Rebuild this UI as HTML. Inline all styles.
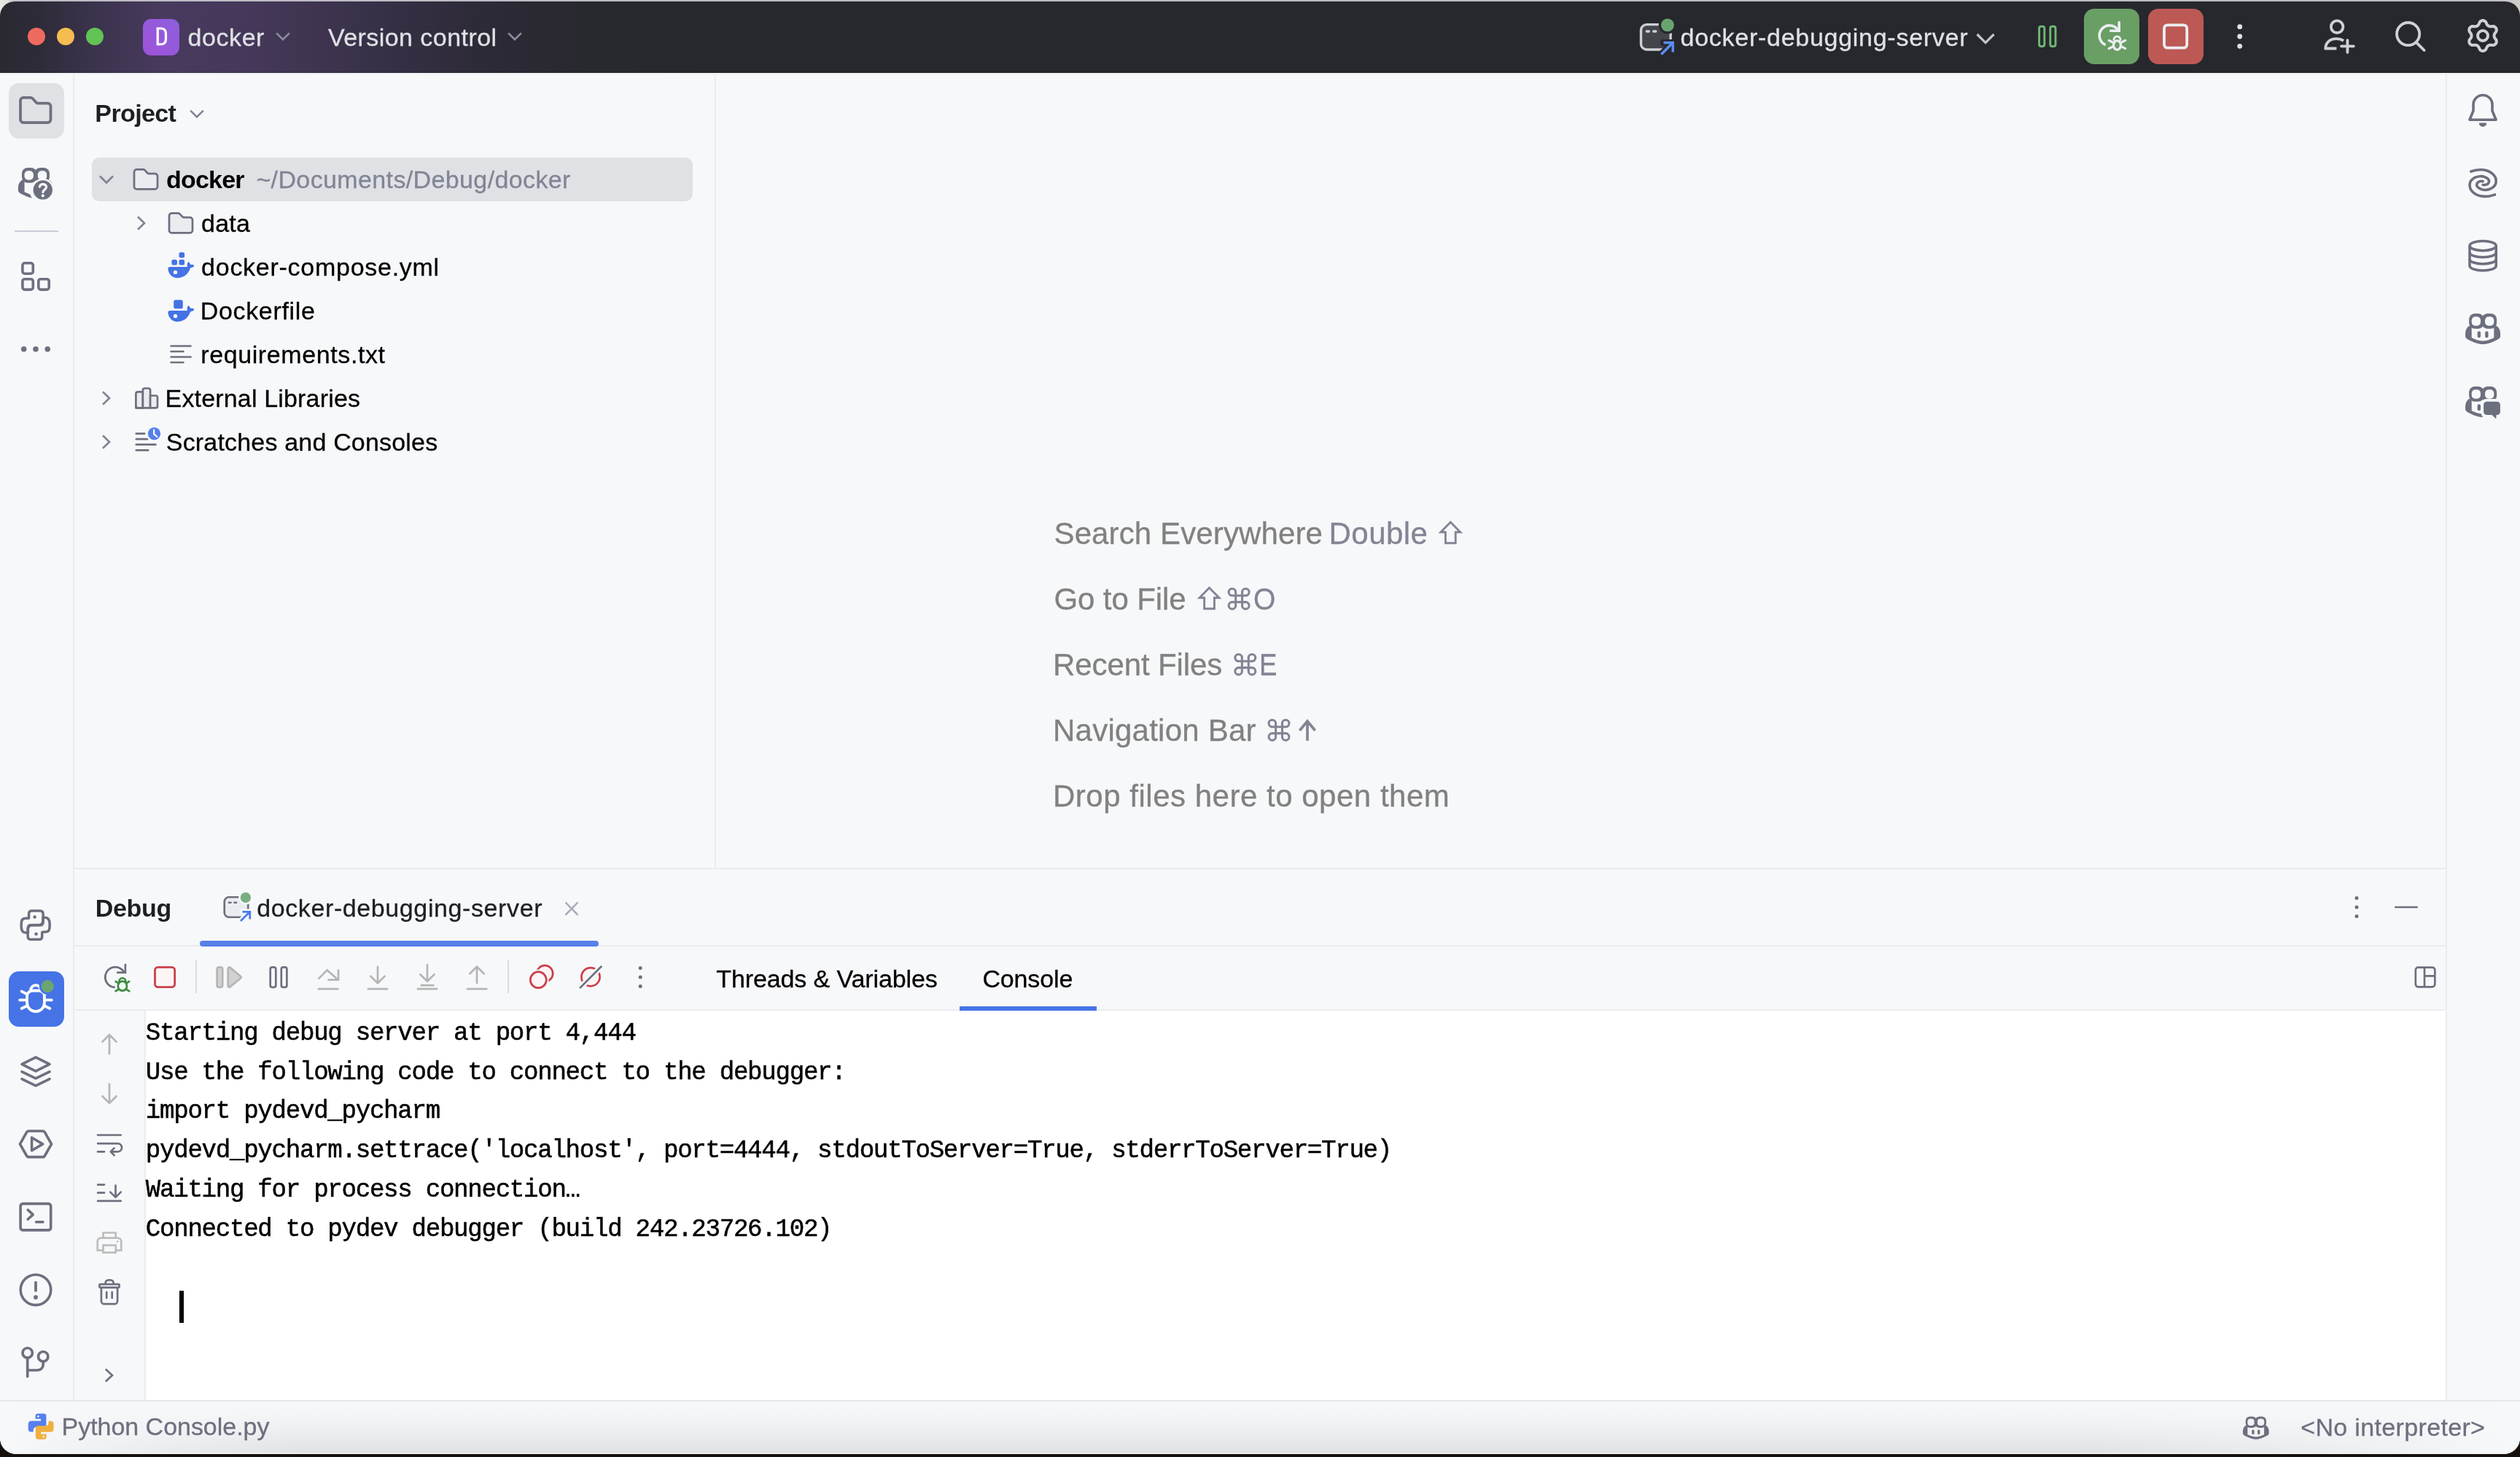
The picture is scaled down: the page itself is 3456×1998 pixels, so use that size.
<!DOCTYPE html>
<html><head><meta charset="utf-8"><title>PyCharm</title>
<style>
html,body{margin:0;padding:0}
body{width:3456px;height:1998px;position:relative;overflow:hidden;background:#15100c;font-family:"Liberation Sans",sans-serif}
body>div,body>span,body>svg,#txt>span{position:absolute}
#txt{left:0;top:0;width:3456px;height:1998px;will-change:transform}
#desk{left:0;top:0;width:3456px;height:40px;background:linear-gradient(90deg,#e9e9df 0,#e3e2db 9px,#c3c2ca 20px,#bdbcc4 40px,#bdbcc4 3425px,#c8c6c4 3440px,#d0cec8 3456px)}
#win{left:0;top:2px;width:3456px;height:1991.5px;background:#f7f8fa;border-radius:20px 20px 22px 22px;overflow:hidden}
#sb{left:0;top:1922px;width:3456px;height:71.5px;border-radius:0 0 22px 22px;box-shadow:inset 0 -1.5px 0 #f1f1f3;background:linear-gradient(90deg,#f7f8fa 0,rgba(247,248,250,0.6) 150px,rgba(247,248,250,0) 420px,rgba(247,248,250,0) 2850px,rgba(247,248,250,0.6) 3250px,#f7f8fa 3455px),linear-gradient(180deg,#f7f8fa 0,#f3f4f6 30%,#ebecee 62%,#dfe0e2 100%)}
#tb{position:absolute;left:0;top:0;width:3456px;height:98px;background:linear-gradient(90deg,#2a2932 0,#2d2b37 50px,#3b334d 130px,#483a5e 225px,#46385b 330px,#3e3450 440px,#342e42 560px,#2c2a35 680px,#28282f 800px,#27282e 950px)}
.t{white-space:pre;line-height:1em;display:block;-webkit-text-stroke:0.3px}
.m{font-family:"Liberation Mono",monospace;-webkit-text-stroke:0.5px}
svg{overflow:visible}
</style></head>
<body>
<div id="desk"></div>
<div id="win">
<div id="tb"></div>
</div>
<div style="left:0px;top:99px;width:3456px;height:1px;background:rgba(20,16,30,0.35);"></div>
<div style="left:0px;top:101px;width:3456px;height:1px;background:#ecedf1;"></div>
<div style="left:100px;top:102px;width:2px;height:1819px;background:#ebecf0;"></div>
<div style="left:980px;top:102px;width:2px;height:1088px;background:#ebecf0;"></div>
<div style="left:3354px;top:102px;width:2px;height:1819px;background:#ebecf0;"></div>
<div style="left:102px;top:1190px;width:3252px;height:2px;background:#ebecf0;"></div>
<div style="left:102px;top:1296px;width:3252px;height:2px;background:#ebecf0;"></div>
<div style="left:102px;top:1384px;width:3252px;height:2px;background:#ebecf0;"></div>
<div style="left:200px;top:1386px;width:3154px;height:534px;background:#ffffff;"></div>
<div style="left:198px;top:1386px;width:2px;height:534px;background:#ebecf0;"></div>
<div style="left:0px;top:1920px;width:3456px;height:2px;background:#e6e7eb;"></div>
<div id="sb"></div>
<div style="left:12px;top:114px;width:76px;height:76px;background:#dfe1e5;border-radius:14px;"></div>
<div style="left:12px;top:1332px;width:76px;height:76px;background:#4674e6;border-radius:14px;"></div>
<div style="left:126px;top:216px;width:824px;height:60px;background:#dfe1e5;border-radius:10px;"></div>
<div style="left:2858px;top:12px;width:76px;height:76px;background:#699e64;border-radius:14px;"></div>
<div style="left:2946px;top:12px;width:76px;height:76px;background:#bd5954;border-radius:14px;"></div>
<div style="left:196px;top:26px;width:50px;height:50px;background:linear-gradient(225deg,#8d5fdc,#9f52da);border-radius:11px;"></div>
<div style="left:274px;top:1290px;width:547px;height:8px;background:#5781e8;border-radius:4px;"></div>
<div style="left:1316px;top:1380px;width:188px;height:6px;background:#4674e8;"></div>
<div style="left:246px;top:1770px;width:6px;height:44px;background:#000;"></div>
<div style="left:38px;top:38px;width:24px;height:24px;background:#ee6a5f;border-radius:12px;"></div>
<div style="left:78px;top:38px;width:24px;height:24px;background:#f5bd4f;border-radius:12px;"></div>
<div style="left:118px;top:38px;width:24px;height:24px;background:#61c454;border-radius:12px;"></div>
<svg style="left:0;top:0" width="3456" height="1998" viewBox="0 0 3456 1998"><path d="M214.6 37.6h6.3c5.6 0 8.2 3.6 8.2 9v6.6c0 5.4-2.6 9-8.2 9h-6.3z M217.9 40.6v18.6h3c3.5 0 4.9-2.2 4.9-6v-6.6c0-3.8-1.4-6-4.9-6z" fill="#ffffff" fill-rule="evenodd"/>
<path d="M379.2 45.4L388 54.199999999999996L396.8 45.4" fill="none" stroke="#8a8da0" stroke-width="2.7" stroke-linecap="butt" stroke-linejoin="miter" />
<path d="M697.2 45.4L706 54.199999999999996L714.8 45.4" fill="none" stroke="#8a8da0" stroke-width="2.7" stroke-linecap="butt" stroke-linejoin="miter" />
<path d="M2711.5 47.0L2723 58.599999999999994L2734.5 47.0" fill="none" stroke="#c5c7cf" stroke-width="3.2" stroke-linecap="butt" stroke-linejoin="miter" />
<g transform="translate(2245.8,25.75) scale(3.125)">
<rect x="1.5" y="2.5" width="13" height="11" rx="2.5" fill="#43454a" stroke="#ced0d6" stroke-width="1.08"/>
<path d="M4 5.5h1M7 5.5h1" stroke="#ced0d6" stroke-width="1.08" stroke-linecap="round"/>
<circle cx="13.15" cy="2.75" r="3.9" fill="#27282e"/>
<path d="M10.4 15.6L15.5 10.5M11.4 10.5H15.5V14.6" stroke="#27282e" stroke-width="3" fill="none" stroke-linecap="round" stroke-linejoin="round"/>
<circle cx="13.15" cy="2.75" r="2.85" fill="#6aa570"/>
<path d="M10.4 15.6L15.5 10.5M11.4 10.5H15.5V14.6" stroke="#5a8df5" stroke-width="1.1" fill="none" stroke-linecap="butt" stroke-linejoin="miter"/>
</g>
<rect x="2796.6" y="36.3" width="7.2" height="27.2" rx="2.6" fill="none" stroke="#6fb873" stroke-width="2.9"/>
<rect x="2811.8" y="36.3" width="7.2" height="27.2" rx="2.6" fill="none" stroke="#6fb873" stroke-width="2.9"/>
<path d="M2887.7 61.6A13.9 13.9 0 1 1 2904.7 41.1" fill="none" stroke="#eceef2" stroke-width="3.6" stroke-linecap="butt" stroke-linejoin="round" />
<path d="M2906.2 30.6V42.2H2894.6" fill="none" stroke="#eceef2" stroke-width="3.6" stroke-linecap="round" stroke-linejoin="miter" />
<ellipse cx="2903.5" cy="62" rx="5" ry="6.2" fill="none" stroke="#eceef2" stroke-width="3.3"/>
<path d="M2899 54.6a4.5 4.5 0 0 1 9 0" fill="none" stroke="#eceef2" stroke-width="3" stroke-linecap="round" stroke-linejoin="round" />
<path d="M2892.2 55.4L2897.6 58.2M2892.2 66.6L2897.6 63.8M2914.8 55.4L2909.4 58.2M2914.8 66.6L2909.4 63.8" fill="none" stroke="#eceef2" stroke-width="3.2" stroke-linecap="round" stroke-linejoin="round" />
<rect x="2968" y="34.4" width="31.2" height="31.2" rx="4.5" fill="none" stroke="#eceef2" stroke-width="3.8"/>
<circle cx="3071.7" cy="36.7" r="3.4" fill="#dfe1e5" stroke="none" stroke-width="0"/>
<circle cx="3071.7" cy="50" r="3.4" fill="#dfe1e5" stroke="none" stroke-width="0"/>
<circle cx="3071.7" cy="63.3" r="3.4" fill="#dfe1e5" stroke="none" stroke-width="0"/>
<circle cx="3205.1" cy="36.7" r="8.3" fill="none" stroke="#ced0d6" stroke-width="3.8"/>
<path d="M3204.4 66.5H3189.2C3189.2 58.5 3195.5 53.2 3204 53.2C3208 53.2 3211.5 54.2 3214 55.8" fill="none" stroke="#ced0d6" stroke-width="3.8" stroke-linecap="butt" stroke-linejoin="round" />
<path d="M3211 63.3H3227.8M3219.4 55.2V71.8" fill="none" stroke="#ced0d6" stroke-width="3.8" stroke-linecap="round" stroke-linejoin="round" />
<circle cx="3302.6" cy="46.6" r="15.6" fill="none" stroke="#ced0d6" stroke-width="3.8"/>
<path d="M3314 58.4L3324.6 69" fill="none" stroke="#ced0d6" stroke-width="3.8" stroke-linecap="round" stroke-linejoin="round" />
<path d="M3420.50 49.00L3420.57 49.82L3420.79 50.66L3421.14 51.56L3421.64 52.54L3422.58 53.71L3423.44 54.99L3423.73 56.19L3423.75 57.35L3423.54 58.45L3423.10 59.45L3422.45 60.33L3421.61 61.07L3420.59 61.62L3419.41 61.97L3417.87 61.87L3416.38 61.64L3415.28 61.70L3414.33 61.84L3413.49 62.08L3412.75 62.42L3412.08 62.89L3411.46 63.50L3410.86 64.25L3410.26 65.18L3409.71 66.58L3409.03 67.96L3408.14 68.81L3407.15 69.42L3406.09 69.78L3405.00 69.90L3403.91 69.78L3402.85 69.42L3401.86 68.81L3400.97 67.96L3400.29 66.58L3399.74 65.18L3399.14 64.25L3398.54 63.50L3397.92 62.89L3397.25 62.42L3396.51 62.08L3395.67 61.84L3394.72 61.70L3393.62 61.64L3392.13 61.87L3390.59 61.97L3389.41 61.62L3388.39 61.07L3387.55 60.33L3386.90 59.45L3386.46 58.45L3386.25 57.35L3386.27 56.19L3386.56 54.99L3387.42 53.71L3388.36 52.54L3388.86 51.56L3389.21 50.66L3389.43 49.82L3389.50 49.00L3389.43 48.18L3389.21 47.34L3388.86 46.44L3388.36 45.46L3387.42 44.29L3386.56 43.01L3386.27 41.81L3386.25 40.65L3386.46 39.55L3386.90 38.55L3387.55 37.67L3388.39 36.93L3389.41 36.38L3390.59 36.03L3392.13 36.13L3393.62 36.36L3394.72 36.30L3395.67 36.16L3396.51 35.92L3397.25 35.58L3397.92 35.11L3398.54 34.50L3399.14 33.75L3399.74 32.82L3400.29 31.42L3400.97 30.04L3401.86 29.19L3402.85 28.58L3403.91 28.22L3405.00 28.10L3406.09 28.22L3407.15 28.58L3408.14 29.19L3409.03 30.04L3409.71 31.42L3410.26 32.82L3410.86 33.75L3411.46 34.50L3412.08 35.11L3412.75 35.58L3413.49 35.92L3414.33 36.16L3415.28 36.30L3416.38 36.36L3417.87 36.13L3419.41 36.03L3420.59 36.38L3421.61 36.93L3422.45 37.67L3423.10 38.55L3423.54 39.55L3423.75 40.65L3423.73 41.81L3423.44 43.01L3422.58 44.29L3421.64 45.46L3421.14 46.44L3420.79 47.34L3420.57 48.18Z" fill="none" stroke="#ced0d6" stroke-width="4.0" stroke-linecap="round" stroke-linejoin="round" />
<circle cx="3405" cy="49" r="7" fill="none" stroke="#ced0d6" stroke-width="4.0"/>
<path d="M28 137.8a4 4 0 0 1 4-4h9.8a4 4 0 0 1 2.8 1.2l5 5.4a4 4 0 0 0 2.9 1.3h13a4 4 0 0 1 4 4v18.4a4 4 0 0 1-4 4h-33.5a4 4 0 0 1-4-4z" fill="none" stroke="#6c707e" stroke-width="3.7" stroke-linecap="round" stroke-linejoin="round" />
<mask id="mq" maskUnits="userSpaceOnUse" x="0" y="200" width="100" height="100"><rect x="0" y="200" width="100" height="100" fill="#fff"/><circle cx="58.75" cy="260.4" r="15.7" fill="#000"/><path d="M40.6 252V265.6L44.4 273H80V252Z" fill="#000"/></mask>
<g mask="url(#mq)">
<g transform="translate(48.9,250.9) scale(1.0)">
<path d="M-19,-4C-22,-2 -24,2 -24,6L-24,10C-24,12 -22.3,13.5 -20,14.8C-12,19.2 -5,21.1 0,21.1C5,21.1 12,19.2 20,14.8C22.3,13.5 24,12 24,10L24,6C24,2 22,-2 19,-4Z" fill="#6c707e" />
<path d="M-15.35,-3L-15.35,12.3C-10,15 -4,16.6 0,16.6C4,16.6 10,15 15.2,12.3L15.2,-3Z" fill="#f7f8fa" />
<rect x="-18.95" y="-21" width="20.45" height="20.9" rx="8" fill="#6c707e"/>
<rect x="-1.5" y="-21" width="20.55" height="20.9" rx="8" fill="#6c707e"/>
<rect x="-15.35" y="-16.7" width="12.3" height="12.5" rx="5" fill="#f7f8fa"/>
<rect x="2.95" y="-16.7" width="12.3" height="12.5" rx="5" fill="#f7f8fa"/>
<rect x="-7.45" y="3.3" width="4.4" height="8.9" rx="2.2" fill="#6c707e"/>
<rect x="3.1" y="3.3" width="4.4" height="8.9" rx="2.2" fill="#6c707e"/>
</g>
</g>
<circle cx="58.75" cy="260.4" r="13.2" fill="#6c707e" stroke="none" stroke-width="0"/>
<path d="M54.3 256.2c0.5-2.4 2.4-3.6 4.6-3.6c2.6 0 4.6 1.6 4.6 3.9c0 3.2-4.6 3.7-4.6 7" fill="none" stroke="#ffffff" stroke-width="3.1" stroke-linecap="round" stroke-linejoin="round" />
<circle cx="58.8" cy="268.3" r="2.1" fill="#ffffff" stroke="none" stroke-width="0"/>
<rect x="20" y="316" width="60" height="2" fill="#c9ccd6"/>
<rect x="30.9" y="360.8" width="14.4" height="14.4" rx="3" fill="none" stroke="#6c707e" stroke-width="3.6"/>
<rect x="30.9" y="382.7" width="14.4" height="14.4" rx="3" fill="none" stroke="#6c707e" stroke-width="3.6"/>
<rect x="52.8" y="382.7" width="14.4" height="14.4" rx="3" fill="none" stroke="#6c707e" stroke-width="3.6"/>
<circle cx="32.7" cy="478.8" r="3.8" fill="#6c707e" stroke="none" stroke-width="0"/>
<circle cx="49" cy="478.8" r="3.8" fill="#6c707e" stroke="none" stroke-width="0"/>
<circle cx="65.2" cy="478.8" r="3.8" fill="#6c707e" stroke="none" stroke-width="0"/>
<path d="M38.35 1279.12L38.35 1274.80Q38.35 1268.82 44.53 1268.82L54.83 1268.82Q59.15 1268.82 59.15 1263.68L59.15 1253.38Q59.15 1249.05 54.83 1249.05L43.71 1249.05Q39.59 1249.05 39.59 1252.97L39.59 1257.91Q39.59 1259.35 38.15 1259.35L35.47 1259.35Q29.29 1259.35 29.29 1265.73L29.09 1269.85Q29.09 1279.12 35.47 1279.12Z" fill="none" stroke="#6c707e" stroke-width="3.5" stroke-linecap="round" stroke-linejoin="round" />
<path d="M58.95 1258.28L58.95 1262.60Q58.95 1268.58 52.77 1268.58L42.47 1268.58Q38.15 1268.58 38.15 1273.72L38.15 1284.02Q38.15 1288.35 42.47 1288.35L53.59 1288.35Q57.71 1288.35 57.71 1284.43L57.71 1279.49Q57.71 1278.05 59.15 1278.05L61.83 1278.05Q68.01 1278.05 68.01 1271.67L68.21 1267.55Q68.21 1258.28 61.83 1258.28Z" fill="none" stroke="#6c707e" stroke-width="3.5" stroke-linecap="round" stroke-linejoin="round" />
<circle cx="47.62" cy="1257.5" r="2.3" fill="#6c707e" stroke="none" stroke-width="0"/>
<circle cx="49.55" cy="1280.8" r="2.3" fill="#6c707e" stroke="none" stroke-width="0"/>
<path d="M37.1 1375.3V1366a7.5 7.5 0 0 1 7.5-7.5h8.8a7.5 7.5 0 0 1 7.5 7.5v9.3a11.9 11.9 0 0 1-23.8 0z" fill="none" stroke="#ffffff" stroke-width="3.8" stroke-linecap="round" stroke-linejoin="round" />
<path d="M42.2 1357.8a6.8 6.8 0 0 1 13.6 0" fill="none" stroke="#ffffff" stroke-width="3.8" stroke-linecap="butt" stroke-linejoin="round" />
<path d="M29.6 1359.4L36 1362.8M27.2 1371.4H36.5M29.6 1383L36.2 1379.8M61.5 1371.4H70.8M61.8 1379.8L68.4 1383M62 1362.8L68.4 1359.4" fill="none" stroke="#ffffff" stroke-width="3.8" stroke-linecap="round" stroke-linejoin="round" />
<circle cx="65.2" cy="1352.5" r="11.4" fill="#4573e6" stroke="none" stroke-width="0"/>
<circle cx="65.2" cy="1352.5" r="8.65" fill="#6ba56f" stroke="none" stroke-width="0"/>
<path d="M49 1449.9L30 1459.4L49 1468.9L68 1459.4Z" fill="none" stroke="#6c707e" stroke-width="3.6" stroke-linecap="round" stroke-linejoin="round" />
<path d="M30 1469.7L49 1478.8L68 1469.7" fill="none" stroke="#6c707e" stroke-width="3.6" stroke-linecap="round" stroke-linejoin="round" />
<path d="M30 1479.6L49 1488.8L68 1479.6" fill="none" stroke="#6c707e" stroke-width="3.6" stroke-linecap="round" stroke-linejoin="round" />
<path d="M27.4 1568.8L36.6 1552.6a3.2 3.2 0 0 1 2.8-1.6H58.6a3.2 3.2 0 0 1 2.8 1.6L70.6 1568.8L61.4 1585a3.2 3.2 0 0 1-2.8 1.6H39.4a3.2 3.2 0 0 1-2.8-1.6Z" fill="none" stroke="#6c707e" stroke-width="3.6" stroke-linecap="round" stroke-linejoin="round" />
<path d="M43.6 1560V1577.8L58.6 1568.9Z" fill="none" stroke="#6c707e" stroke-width="3.6" stroke-linecap="round" stroke-linejoin="round" />
<rect x="28.1" y="1650.6" width="41.6" height="36.3" rx="3.5" fill="none" stroke="#6c707e" stroke-width="3.6"/>
<path d="M38.2 1659.2L45.2 1665.6L38.2 1672" fill="none" stroke="#6c707e" stroke-width="3.6" stroke-linecap="round" stroke-linejoin="round" />
<path d="M49.6 1675.8H59" fill="none" stroke="#6c707e" stroke-width="3.6" stroke-linecap="round" stroke-linejoin="round" />
<circle cx="49" cy="1768.8" r="20.8" fill="none" stroke="#6c707e" stroke-width="3.6"/>
<path d="M49 1758.6V1769.8" fill="none" stroke="#6c707e" stroke-width="3.8" stroke-linecap="round" stroke-linejoin="round" />
<circle cx="49" cy="1779" r="2.9" fill="#6c707e" stroke="none" stroke-width="0"/>
<circle cx="37.7" cy="1855.2" r="6.7" fill="none" stroke="#6c707e" stroke-width="3.7"/>
<circle cx="59.2" cy="1860.2" r="6.7" fill="none" stroke="#6c707e" stroke-width="3.7"/>
<path d="M37.7 1862V1887.4" fill="none" stroke="#6c707e" stroke-width="3.7" stroke-linecap="round" stroke-linejoin="round" />
<path d="M37.7 1879H51.4a7.8 7.8 0 0 0 7.8-7.8V1867" fill="none" stroke="#6c707e" stroke-width="3.7" stroke-linecap="butt" stroke-linejoin="round" />
<path d="M3386.9 164.2L3392 152V143.5A13 13 0 0 1 3418 143.5V152L3423.1 164.2Z" fill="none" stroke="#6c707e" stroke-width="3.6" stroke-linecap="round" stroke-linejoin="round" />
<path d="M3399.8 168.4H3410.2A5.2 5.4 0 0 1 3399.8 168.4Z" fill="#6c707e" />
<path d="M3388.75 235.19C3389.97 234.85 3393.61 233.56 3396.10 233.16C3398.59 232.76 3401.08 232.61 3403.66 232.79C3406.24 232.97 3409.20 233.38 3411.60 234.26C3414.00 235.14 3416.33 236.61 3418.08 238.08C3419.83 239.55 3421.26 241.46 3422.10 243.06C3422.94 244.66 3423.08 246.11 3423.13 247.69C3423.18 249.27 3423.00 251.12 3422.40 252.56C3421.80 254.00 3420.82 255.23 3419.52 256.35C3418.22 257.47 3416.44 258.58 3414.60 259.26C3412.76 259.94 3410.39 260.37 3408.47 260.44C3406.55 260.51 3404.70 260.18 3403.10 259.66C3401.50 259.14 3399.88 258.08 3398.85 257.31C3397.82 256.54 3397.26 255.78 3396.90 255.06C3396.54 254.34 3396.56 253.70 3396.69 252.98C3396.82 252.26 3397.18 251.40 3397.70 250.76C3398.22 250.12 3399.01 249.51 3399.81 249.14C3400.61 248.77 3401.62 248.64 3402.50 248.56C3403.38 248.48 3404.67 248.64 3405.10 248.66" fill="none" stroke="#6c707e" stroke-width="3.6" stroke-linecap="round" stroke-linejoin="round" />
<path d="M3421.45 266.93C3420.22 267.27 3416.59 268.56 3414.10 268.96C3411.61 269.36 3409.12 269.51 3406.54 269.33C3403.96 269.15 3401.00 268.74 3398.60 267.86C3396.20 266.98 3393.87 265.51 3392.12 264.04C3390.37 262.57 3388.94 260.66 3388.10 259.06C3387.26 257.46 3387.12 256.01 3387.07 254.43C3387.02 252.85 3387.20 251.00 3387.80 249.56C3388.40 248.12 3389.38 246.89 3390.68 245.77C3391.98 244.65 3393.76 243.54 3395.60 242.86C3397.44 242.18 3399.81 241.75 3401.73 241.68C3403.65 241.61 3405.50 241.94 3407.10 242.46C3408.70 242.98 3410.32 244.04 3411.35 244.81C3412.38 245.58 3412.94 246.34 3413.30 247.06C3413.66 247.78 3413.64 248.42 3413.51 249.14C3413.38 249.86 3413.02 250.72 3412.50 251.36C3411.98 252.00 3411.19 252.61 3410.39 252.98C3409.59 253.35 3408.58 253.48 3407.70 253.56C3406.82 253.64 3405.53 253.48 3405.10 253.46" fill="none" stroke="#6c707e" stroke-width="3.6" stroke-linecap="round" stroke-linejoin="round" />
<ellipse cx="3405.1" cy="337.1" rx="18.1" ry="6.6" fill="none" stroke="#6c707e" stroke-width="3.6"/>
<path d="M3387 337.1V364.5a18.1 6.6 0 0 0 36.2 0V337.1" fill="none" stroke="#6c707e" stroke-width="3.6" stroke-linecap="butt" stroke-linejoin="round" />
<path d="M3387 346.2a18.1 6.6 0 0 0 36.2 0M3387 355.4a18.1 6.6 0 0 0 36.2 0" fill="none" stroke="#6c707e" stroke-width="3.6" stroke-linecap="butt" stroke-linejoin="round" />
<g transform="translate(3405.05,450.9) scale(1.0)">
<path d="M-19,-4C-22,-2 -24,2 -24,6L-24,10C-24,12 -22.3,13.5 -20,14.8C-12,19.2 -5,21.1 0,21.1C5,21.1 12,19.2 20,14.8C22.3,13.5 24,12 24,10L24,6C24,2 22,-2 19,-4Z" fill="#6c707e" />
<path d="M-15.35,-3L-15.35,12.3C-10,15 -4,16.6 0,16.6C4,16.6 10,15 15.2,12.3L15.2,-3Z" fill="#f7f8fa" />
<rect x="-18.95" y="-21" width="20.45" height="20.9" rx="8" fill="#6c707e"/>
<rect x="-1.5" y="-21" width="20.55" height="20.9" rx="8" fill="#6c707e"/>
<rect x="-15.35" y="-16.7" width="12.3" height="12.5" rx="5" fill="#f7f8fa"/>
<rect x="2.95" y="-16.7" width="12.3" height="12.5" rx="5" fill="#f7f8fa"/>
<rect x="-7.45" y="3.3" width="4.4" height="8.9" rx="2.2" fill="#6c707e"/>
<rect x="3.1" y="3.3" width="4.4" height="8.9" rx="2.2" fill="#6c707e"/>
</g>
<mask id="mc" maskUnits="userSpaceOnUse" x="3360" y="500" width="96" height="100"><rect x="3360" y="500" width="96" height="100" fill="#fff"/><rect x="3402.7" y="547.1" width="32" height="26" rx="7" fill="#000"/><path d="M3402.7 560V567L3406 573.5H3440V560Z" fill="#000"/></mask>
<g mask="url(#mc)">
<g transform="translate(3405.05,550.9) scale(1.0)">
<path d="M-19,-4C-22,-2 -24,2 -24,6L-24,10C-24,12 -22.3,13.5 -20,14.8C-12,19.2 -5,21.1 0,21.1C5,21.1 12,19.2 20,14.8C22.3,13.5 24,12 24,10L24,6C24,2 22,-2 19,-4Z" fill="#6c707e" />
<path d="M-15.35,-3L-15.35,12.3C-10,15 -4,16.6 0,16.6C4,16.6 10,15 15.2,12.3L15.2,-3Z" fill="#f7f8fa" />
<rect x="-18.95" y="-21" width="20.45" height="20.9" rx="8" fill="#6c707e"/>
<rect x="-1.5" y="-21" width="20.55" height="20.9" rx="8" fill="#6c707e"/>
<rect x="-15.35" y="-16.7" width="12.3" height="12.5" rx="5" fill="#f7f8fa"/>
<rect x="2.95" y="-16.7" width="12.3" height="12.5" rx="5" fill="#f7f8fa"/>
<rect x="-7.45" y="3.3" width="4.4" height="8.9" rx="2.2" fill="#6c707e"/>
<rect x="3.1" y="3.3" width="4.4" height="8.9" rx="2.2" fill="#6c707e"/>
</g>
</g>
<rect x="3406.1" y="550.8" width="22.8" height="18.3" rx="4.2" fill="#6c707e"/>
<path d="M3417 568.5L3423.2 574.6L3423.6 568.5Z" fill="#6c707e" />
<g transform="translate(3093.8,1958) scale(0.744)">
<path d="M-19,-4C-22,-2 -24,2 -24,6L-24,10C-24,12 -22.3,13.5 -20,14.8C-12,19.2 -5,21.1 0,21.1C5,21.1 12,19.2 20,14.8C22.3,13.5 24,12 24,10L24,6C24,2 22,-2 19,-4Z" fill="#6c707e" />
<path d="M-15.35,-3L-15.35,12.3C-10,15 -4,16.6 0,16.6C4,16.6 10,15 15.2,12.3L15.2,-3Z" fill="#f1f2f4" />
<rect x="-18.95" y="-21" width="20.45" height="20.9" rx="8" fill="#6c707e"/>
<rect x="-1.5" y="-21" width="20.55" height="20.9" rx="8" fill="#6c707e"/>
<rect x="-15.35" y="-16.7" width="12.3" height="12.5" rx="5" fill="#f1f2f4"/>
<rect x="2.95" y="-16.7" width="12.3" height="12.5" rx="5" fill="#f1f2f4"/>
<rect x="-7.45" y="3.3" width="4.4" height="8.9" rx="2.2" fill="#6c707e"/>
<rect x="3.1" y="3.3" width="4.4" height="8.9" rx="2.2" fill="#6c707e"/>
</g>
<path d="M261.2 151.6L270 160.4L278.8 151.6" fill="none" stroke="#818594" stroke-width="2.7" stroke-linecap="butt" stroke-linejoin="miter" />
<path d="M137 241.5L146 250.5L155 241.5" fill="none" stroke="#818594" stroke-width="2.7" stroke-linecap="butt" stroke-linejoin="miter" />
<path d="M184 235.9a3.5 3.5 0 0 1 3.5-3.5h8.6a3.5 3.5 0 0 1 2.5 1l3.3 3.6a3.5 3.5 0 0 0 2.6 1.2h8a3.5 3.5 0 0 1 3.5 3.5v14.2a3.5 3.5 0 0 1-3.5 3.5h-25a3.5 3.5 0 0 1-3.5-3.5z" fill="#ebecf0" stroke="#6c707e" stroke-width="2.7" stroke-linecap="round" stroke-linejoin="round" />
<path d="M232 295.9a3.5 3.5 0 0 1 3.5-3.5h8.6a3.5 3.5 0 0 1 2.5 1l3.3 3.6a3.5 3.5 0 0 0 2.6 1.2h8a3.5 3.5 0 0 1 3.5 3.5v14.2a3.5 3.5 0 0 1-3.5 3.5h-25a3.5 3.5 0 0 1-3.5-3.5z" fill="#ebecf0" stroke="#6c707e" stroke-width="2.7" stroke-linecap="round" stroke-linejoin="round" />
<path d="M189.0 297.3L198.0 306L189.0 314.7" fill="none" stroke="#818594" stroke-width="2.7" stroke-linecap="butt" stroke-linejoin="miter" />
<path d="M141.0 537.3L150.0 546L141.0 554.7" fill="none" stroke="#818594" stroke-width="2.7" stroke-linecap="butt" stroke-linejoin="miter" />
<path d="M141.0 597.3L150.0 606L141.0 614.7" fill="none" stroke="#818594" stroke-width="2.7" stroke-linecap="butt" stroke-linejoin="miter" />
<path d="M233 365.9H257C256.2 363 256.8 360.5 258.4 358.9C260 360 261 361.5 261.5 363C263 362.6 265 363 266.3 364.1C265.8 365.8 264.5 366.8 263.2 366.9L261.2 367.3C260.5 369.5 259.5 371.5 258.2 373.2C255 378.5 249.5 381.2 243.4 381.2C236.5 381.2 231 376 230.4 368.5C230.3 367 231.3 365.9 233 365.9Z" fill="#4573e6" />
<circle cx="240.5" cy="373.4" r="2.7" fill="#f7f8fa" stroke="none" stroke-width="0"/>
<path d="M233 425.9H257C256.2 423 256.8 420.5 258.4 418.9C260 420 261 421.5 261.5 423C263 422.6 265 423 266.3 424.1C265.8 425.8 264.5 426.8 263.2 426.9L261.2 427.3C260.5 429.5 259.5 431.5 258.2 433.2C255 438.5 249.5 441.2 243.4 441.2C236.5 441.2 231 436 230.4 428.5C230.3 427 231.3 425.9 233 425.9Z" fill="#4573e6" />
<circle cx="240.5" cy="433.4" r="2.7" fill="#f7f8fa" stroke="none" stroke-width="0"/>
<rect x="245.5" y="346" width="7.6" height="7.5" rx="2.2" fill="#4573e6"/>
<rect x="235.4" y="356.1" width="7.6" height="7.5" rx="2.2" fill="#4573e6"/>
<rect x="245.5" y="356.1" width="7.6" height="7.5" rx="2.2" fill="#4573e6"/>
<rect x="238.2" y="411.2" width="12.6" height="12.1" rx="2.6" fill="#4573e6"/>
<path d="M234.6 474.5H261.5M234.6 482H251.4M234.6 489.5H261.5M234.6 497H251.4" fill="none" stroke="#6c707e" stroke-width="2.7" stroke-linecap="round" stroke-linejoin="round" />
<path d="M186.4 559.4V539.9a2.5 2.5 0 0 1 2.5-2.5h7V559.4Z" fill="#ebecf0" stroke="#6c707e" stroke-width="2.7" stroke-linecap="round" stroke-linejoin="round" />
<path d="M195.9 559.4V535a2.5 2.5 0 0 1 2.5-2.5h5.2a2.5 2.5 0 0 1 2.5 2.5V559.4Z" fill="#ebecf0" stroke="#6c707e" stroke-width="2.7" stroke-linecap="round" stroke-linejoin="round" />
<path d="M206.1 559.4V542.5h7.4a2.5 2.5 0 0 1 2.5 2.5v11.9a2.5 2.5 0 0 1-2.5 2.5Z" fill="#ebecf0" stroke="#6c707e" stroke-width="2.7" stroke-linecap="round" stroke-linejoin="round" />
<path d="M186.4 557v-0.1a2.5 2.5 0 0 0 2.5 2.5h8" fill="none" stroke="#6c707e" stroke-width="2.7" stroke-linecap="round" stroke-linejoin="round" />
<path d="M186.8 594.7H198.2M186.8 602.2H202M186.8 609.7H213.5M186.8 617.4H203.2" fill="none" stroke="#6c707e" stroke-width="2.7" stroke-linecap="round" stroke-linejoin="round" />
<circle cx="211.5" cy="594.7" r="10.6" fill="#f7f8fa" stroke="none" stroke-width="0"/>
<circle cx="211.5" cy="594.7" r="8.65" fill="#5580ed" stroke="none" stroke-width="0"/>
<path d="M211.1 589.6V595.3L215.4 598.8" fill="none" stroke="#ffffff" stroke-width="2.2" stroke-linecap="round" stroke-linejoin="round" />
<g transform="translate(304,1224) scale(2.5)">
<rect x="1.5" y="2.5" width="13" height="11" rx="2.5" fill="#ebecf0" stroke="#6c707e" stroke-width="1.08"/>
<path d="M4 5.5h1M7 5.5h1" stroke="#6c707e" stroke-width="1.08" stroke-linecap="round"/>
<circle cx="13.15" cy="2.75" r="3.9" fill="#f7f8fa"/>
<path d="M10.4 15.6L15.5 10.5M11.4 10.5H15.5V14.6" stroke="#f7f8fa" stroke-width="3" fill="none" stroke-linecap="round" stroke-linejoin="round"/>
<circle cx="13.15" cy="2.75" r="2.85" fill="#7aae80"/>
<path d="M10.4 15.6L15.5 10.5M11.4 10.5H15.5V14.6" stroke="#4a7bef" stroke-width="1.1" fill="none" stroke-linecap="butt" stroke-linejoin="miter"/>
</g>
<path d="M776.2 1238.2L791.8 1254M791.8 1238.2L776.2 1254" fill="none" stroke="#a8adbd" stroke-width="2.5" stroke-linecap="round" stroke-linejoin="round" />
<circle cx="3232" cy="1231.6" r="2.5" fill="#6c707e" stroke="none" stroke-width="0"/>
<circle cx="3232" cy="1244" r="2.5" fill="#6c707e" stroke="none" stroke-width="0"/>
<circle cx="3232" cy="1256.5" r="2.5" fill="#6c707e" stroke="none" stroke-width="0"/>
<path d="M3285.3 1244H3314.7" fill="none" stroke="#6c707e" stroke-width="2.7" stroke-linecap="round" stroke-linejoin="round" />
<rect x="3312.8" y="1326.7" width="26.5" height="26.6" rx="3.5" fill="none" stroke="#6c707e" stroke-width="2.7"/>
<path d="M3325 1326.7V1353.3M3325 1338.3H3339.3" fill="none" stroke="#6c707e" stroke-width="2.7" stroke-linecap="butt" stroke-linejoin="round" />
<path d="M157.8 1353.9A13.9 13.9 0 1 1 170.5 1333.6" fill="none" stroke="#6c707e" stroke-width="2.7" stroke-linecap="butt" stroke-linejoin="round" />
<path d="M171.9 1322.9V1333.7H161.2" fill="none" stroke="#6c707e" stroke-width="2.7" stroke-linecap="round" stroke-linejoin="miter" />
<ellipse cx="167.9" cy="1352" rx="8.6" ry="9" fill="#f7f8fa"/>
<path d="M158.6 1345.9L162.3 1348.2M158.6 1359.2L162.6 1356.6M177.2 1345.9L173.5 1348.2M177.2 1359.2L173.2 1356.6" fill="none" stroke="#f7f8fa" stroke-width="6.5" stroke-linecap="round" stroke-linejoin="round" />
<path d="M163.4 1346.2a4.5 4.9 0 0 1 9 0" fill="none" stroke="#3b8a40" stroke-width="2.6" stroke-linecap="round" stroke-linejoin="round" />
<ellipse cx="167.9" cy="1352.2" rx="6.1" ry="6.5" fill="#f0faf1" stroke="#3b8a40" stroke-width="2.7"/>
<path d="M158.6 1345.9L162.3 1348.2M158.6 1359.2L162.6 1356.6M177.2 1345.9L173.5 1348.2M177.2 1359.2L173.2 1356.6" fill="none" stroke="#3b8a40" stroke-width="2.7" stroke-linecap="round" stroke-linejoin="round" />
<rect x="212.5" y="1326.4" width="27.2" height="27.2" rx="4" fill="#fdf5f5" stroke="#cb3f4b" stroke-width="2.8"/>
<rect x="268" y="1316" width="2" height="46" fill="#dcdde3"/>
<rect x="696" y="1316" width="2" height="46" fill="#dcdde3"/>
<rect x="297.6" y="1326.4" width="7.6" height="27.4" rx="2.5" fill="#d1d1d1" stroke="#b5b5b5" stroke-width="2.7"/>
<path d="M312.7 1328.3V1351.9a1.8 1.8 0 0 0 3 1.4l14.2-11.8a1.8 1.8 0 0 0 0-2.8l-14.2-11.8a1.8 1.8 0 0 0-3 1.4z" fill="#d1d1d1" stroke="#b5b5b5" stroke-width="2.7" stroke-linecap="round" stroke-linejoin="round" />
<rect x="370.7" y="1326.4" width="7.6" height="27.4" rx="2.5" fill="none" stroke="#6c707e" stroke-width="2.7"/>
<rect x="385.8" y="1326.4" width="7.6" height="27.4" rx="2.5" fill="none" stroke="#6c707e" stroke-width="2.7"/>
<path d="M436.4 1342.6L448.7 1330.4L463 1343" fill="none" stroke="#b5b5b5" stroke-width="2.7" stroke-linecap="butt" stroke-linejoin="miter" />
<path d="M464 1330.6V1343.7H450.6" fill="none" stroke="#b5b5b5" stroke-width="2.7" stroke-linecap="round" stroke-linejoin="miter" />
<path d="M436.9 1356.2H463.4" fill="none" stroke="#b5b5b5" stroke-width="2.7" stroke-linecap="round" stroke-linejoin="round" />
<path d="M518 1325.8V1347M508.3 1338.6L518 1348.3L527.7 1338.6" fill="none" stroke="#b5b5b5" stroke-width="2.7" stroke-linecap="round" stroke-linejoin="round" />
<path d="M505 1356.2H531" fill="none" stroke="#b5b5b5" stroke-width="2.7" stroke-linecap="round" stroke-linejoin="round" />
<path d="M586 1323.2V1344.6M576.4 1336.2L586 1345.8L595.6 1336.2" fill="none" stroke="#b5b5b5" stroke-width="2.7" stroke-linecap="round" stroke-linejoin="round" />
<path d="M577.8 1351.2H594.4M572.9 1356.2H599.2" fill="none" stroke="#b5b5b5" stroke-width="2.7" stroke-linecap="round" stroke-linejoin="round" />
<path d="M654 1348V1326.8M644.3 1335.2L654 1325.5L663.7 1335.2" fill="none" stroke="#b5b5b5" stroke-width="2.7" stroke-linecap="round" stroke-linejoin="round" />
<path d="M641 1356.2H667.2" fill="none" stroke="#b5b5b5" stroke-width="2.7" stroke-linecap="round" stroke-linejoin="round" />
<circle cx="747.2" cy="1334.9" r="11" fill="#fcf4f4" stroke="#cb3f4b" stroke-width="2.7"/>
<circle cx="738.3" cy="1343.7" r="14.3" fill="#f7f8fa" stroke="none" stroke-width="0"/>
<circle cx="738.3" cy="1343.7" r="11" fill="#fcf4f4" stroke="#cb3f4b" stroke-width="2.7"/>
<circle cx="810" cy="1339.7" r="12.6" fill="#fcf4f4" stroke="#cb3f4b" stroke-width="2.7"/>
<path d="M795.8 1354.4L824.5 1325.5" fill="none" stroke="#f7f8fa" stroke-width="8" stroke-linecap="butt" stroke-linejoin="round" />
<path d="M795.8 1354.4L824.5 1325.5" fill="none" stroke="#6c707e" stroke-width="2.7" stroke-linecap="round" stroke-linejoin="round" />
<circle cx="878.2" cy="1327.5" r="2.5" fill="#6c707e" stroke="none" stroke-width="0"/>
<circle cx="878.2" cy="1340" r="2.5" fill="#6c707e" stroke="none" stroke-width="0"/>
<circle cx="878.2" cy="1352.6" r="2.5" fill="#6c707e" stroke="none" stroke-width="0"/>
<path d="M150 1445V1420.2M140.4 1428.6L150 1419L159.6 1428.6" fill="none" stroke="#b5b5b5" stroke-width="2.7" stroke-linecap="round" stroke-linejoin="round" />
<path d="M150 1486.7V1512M140.4 1503.2L150 1512.8L159.6 1503.2" fill="none" stroke="#b5b5b5" stroke-width="2.7" stroke-linecap="round" stroke-linejoin="round" />
<path d="M134.1 1556.5H165.7" fill="none" stroke="#6c707e" stroke-width="2.7" stroke-linecap="round" stroke-linejoin="round" />
<path d="M134.1 1568.1H161.5a5.6 5.6 0 0 1 0 11.2H153" fill="none" stroke="#6c707e" stroke-width="2.7" stroke-linecap="round" stroke-linejoin="round" />
<path d="M156.6 1574.4L151.8 1579.3L156.6 1584.2" fill="none" stroke="#6c707e" stroke-width="2.7" stroke-linecap="round" stroke-linejoin="round" />
<path d="M134.1 1579.3H143" fill="none" stroke="#6c707e" stroke-width="2.7" stroke-linecap="round" stroke-linejoin="round" />
<path d="M134.1 1624.6H143M134.1 1635.7H143M134.1 1646.9H165.7" fill="none" stroke="#6c707e" stroke-width="2.7" stroke-linecap="round" stroke-linejoin="round" />
<path d="M158.5 1625.6V1640.6M151.2 1634.6L158.5 1641.9L165.8 1634.6" fill="none" stroke="#6c707e" stroke-width="2.7" stroke-linecap="round" stroke-linejoin="round" />
<path d="M141.5 1697.6V1690.5H158.7V1697.6" fill="none" stroke="#bdbdbd" stroke-width="2.7" stroke-linecap="butt" stroke-linejoin="miter" />
<path d="M141.5 1714.7H133.7V1702.6a5 5 0 0 1 5-5h22.6a5 5 0 0 1 5 5V1714.7H158.7" fill="none" stroke="#bdbdbd" stroke-width="2.7" stroke-linecap="butt" stroke-linejoin="miter" />
<path d="M141.5 1707.6H158.7V1717.6H141.5Z" fill="none" stroke="#bdbdbd" stroke-width="2.7" stroke-linecap="round" stroke-linejoin="miter" />
<circle cx="161.2" cy="1702.6" r="1.3" fill="#bdbdbd" stroke="none" stroke-width="0"/>
<path d="M144.6 1760.6v-1.2a4 4 0 0 1 4-4h3a4 4 0 0 1 4 4v1.2" fill="none" stroke="#6c707e" stroke-width="2.7" stroke-linecap="butt" stroke-linejoin="round" />
<rect x="136.4" y="1761.05" width="27.2" height="4.5" rx="1" fill="none" stroke="#6c707e" stroke-width="2.7"/>
<path d="M138.9 1766.5V1784.2a4 4 0 0 0 4 4h14.2a4 4 0 0 0 4-4V1766.5" fill="none" stroke="#6c707e" stroke-width="2.7" stroke-linecap="butt" stroke-linejoin="round" />
<path d="M146.2 1771.9V1780M153.7 1771.9V1780" fill="none" stroke="#6c707e" stroke-width="2.7" stroke-linecap="round" stroke-linejoin="round" />
<path d="M144.8 1877.4L154.0 1886L144.8 1894.6" fill="none" stroke="#6c707e" stroke-width="2.7" stroke-linecap="butt" stroke-linejoin="miter" />
<path d="M48.59 1945.72L56.01 1945.72L56.01 1948.40L43.24 1948.40Q38.71 1948.40 38.71 1952.93L38.71 1958.90Q38.71 1963.43 42.42 1963.43L45.71 1963.43L45.71 1961.37Q45.71 1956.84 51.06 1956.84L60.13 1956.84Q63.42 1956.84 63.42 1953.13L63.42 1941.60Q63.42 1938.51 60.13 1938.51L51.89 1938.51Q48.59 1938.51 48.59 1941.60Z" fill="#5580ee" />
<path d="M63.67 1966.48L56.25 1966.48L56.25 1963.80L69.02 1963.80Q73.55 1963.80 73.55 1959.27L73.55 1953.30Q73.55 1948.77 69.84 1948.77L66.55 1948.77L66.55 1950.83Q66.55 1955.36 61.20 1955.36L52.13 1955.36Q48.84 1955.36 48.84 1959.07L48.84 1970.60Q48.84 1973.69 52.13 1973.69L60.37 1973.69Q63.67 1973.69 63.67 1970.60Z" fill="#f0b040" />
<circle cx="52.29968698517298" cy="1942.2202635914332" r="1.3" fill="#f7f8fa" stroke="none" stroke-width="0"/>
<circle cx="59.75438220757825" cy="1969.897364085667" r="1.3" fill="#f7f8fa" stroke="none" stroke-width="0"/>
<path d="M1989.3000000000002 716.0999999999999L1975.9 729.6999999999999H1982.4V744.6999999999999H1996.2V729.6999999999999H2002.7Z" fill="none" stroke="#818594" stroke-width="2.9" stroke-linecap="butt" stroke-linejoin="miter" />
<path d="M1658.5 806.0999999999999L1645.1 819.6999999999999H1651.6V834.6999999999999H1665.3999999999999V819.6999999999999H1671.8999999999999Z" fill="none" stroke="#818594" stroke-width="2.9" stroke-linecap="butt" stroke-linejoin="miter" />
<path d="M1694.6499999999999 830.4000000000001V812.0A4.75 4.75 0 1 0 1689.8999999999999 816.75H1708.3A4.75 4.75 0 1 0 1703.55 812.0V830.4000000000001A4.75 4.75 0 1 0 1708.3 825.6500000000001H1689.8999999999999A4.75 4.75 0 1 0 1694.6499999999999 830.4000000000001Z" fill="none" stroke="#818594" stroke-width="3.1" stroke-linecap="butt" stroke-linejoin="round" />
<path d="M1703.35 920.4000000000001V902.0A4.75 4.75 0 1 0 1698.6 906.75H1717.0A4.75 4.75 0 1 0 1712.25 902.0V920.4000000000001A4.75 4.75 0 1 0 1717.0 915.6500000000001H1698.6A4.75 4.75 0 1 0 1703.35 920.4000000000001Z" fill="none" stroke="#818594" stroke-width="3.1" stroke-linecap="butt" stroke-linejoin="round" />
<path d="M1749.55 1010.4000000000001V992.0A4.75 4.75 0 1 0 1744.8 996.75H1763.2A4.75 4.75 0 1 0 1758.45 992.0V1010.4000000000001A4.75 4.75 0 1 0 1763.2 1005.6500000000001H1744.8A4.75 4.75 0 1 0 1749.55 1010.4000000000001Z" fill="none" stroke="#818594" stroke-width="3.1" stroke-linecap="butt" stroke-linejoin="round" />
<path d="M1793 1015.7V989M1782.4 1001.8L1793 989L1803.6 1001.8" fill="none" stroke="#818594" stroke-width="3.7" stroke-linecap="butt" stroke-linejoin="miter" /></svg>
<div id="txt">
<span class="t" style="left:257.62px;top:33.72px;font-size:34px;color:#dfe1e5;letter-spacing:0.550px;">docker</span>
<span class="t" style="left:449.88px;top:33.72px;font-size:34px;color:#dfe1e5;letter-spacing:0.455px;">Version control</span>
<span class="t" style="left:2304.62px;top:33.72px;font-size:34px;color:#dfe1e5;letter-spacing:0.722px;">docker-debugging-server</span>
<span class="t" style="left:130.35px;top:137.52px;font-size:34px;color:#1e1f22;letter-spacing:-0.625px;font-weight:700;-webkit-text-stroke:0;">Project</span>
<span class="t" style="left:227.93px;top:228.72px;font-size:34px;color:#000000;letter-spacing:-0.785px;font-weight:700;-webkit-text-stroke:0;">docker</span>
<span class="t" style="left:351.40px;top:228.72px;font-size:34px;color:#818594;letter-spacing:0.374px;">~/Documents/Debug/docker</span>
<span class="t" style="left:276.12px;top:288.72px;font-size:34px;color:#000000;letter-spacing:0.175px;">data</span>
<span class="t" style="left:276.12px;top:348.72px;font-size:34px;color:#000000;letter-spacing:0.728px;">docker-compose.yml</span>
<span class="t" style="left:274.75px;top:408.72px;font-size:34px;color:#000000;letter-spacing:0.656px;">Dockerfile</span>
<span class="t" style="left:275.25px;top:468.72px;font-size:34px;color:#000000;letter-spacing:0.602px;">requirements.txt</span>
<span class="t" style="left:226.55px;top:528.72px;font-size:34px;color:#000000;letter-spacing:0.168px;">External Libraries</span>
<span class="t" style="left:227.80px;top:588.72px;font-size:34px;color:#000000;letter-spacing:0.182px;">Scratches and Consoles</span>
<span class="t" style="left:1445.53px;top:710.75px;font-size:42px;color:#818181;letter-spacing:0.116px;">Search Everywhere</span>
<span class="t" style="left:1822.62px;top:710.75px;font-size:42px;color:#818594;letter-spacing:0.425px;">Double</span>
<span class="t" style="left:1445.40px;top:800.75px;font-size:42px;color:#818181;letter-spacing:-0.094px;">Go to File</span>
<span class="t" style="left:1718.76px;top:800.75px;font-size:42px;color:#818594;letter-spacing:0.000px;transform:scaleX(0.928);transform-origin:0 0;">O</span>
<span class="t" style="left:1444.03px;top:890.75px;font-size:42px;color:#818181;letter-spacing:-0.109px;">Recent Files</span>
<span class="t" style="left:1727.06px;top:890.75px;font-size:42px;color:#818594;letter-spacing:0.000px;transform:scaleX(0.870);transform-origin:0 0;">E</span>
<span class="t" style="left:1444.03px;top:980.75px;font-size:42px;color:#818181;letter-spacing:0.238px;">Navigation Bar</span>
<span class="t" style="left:1444.03px;top:1070.75px;font-size:42px;color:#818181;letter-spacing:0.512px;">Drop files here to open them</span>
<span class="t" style="left:130.75px;top:1228.02px;font-size:34px;color:#1e1f22;letter-spacing:-0.312px;font-weight:700;-webkit-text-stroke:0;">Debug</span>
<span class="t" style="left:352.23px;top:1228.02px;font-size:34px;color:#1e1f22;letter-spacing:0.603px;">docker-debugging-server</span>
<span class="t" style="left:982.25px;top:1325.22px;font-size:34px;color:#000000;letter-spacing:-0.113px;">Threads &amp; Variables</span>
<span class="t" style="left:1347.38px;top:1325.22px;font-size:34px;color:#000000;letter-spacing:-0.125px;">Console</span>
<span class="t" style="left:84.55px;top:1939.22px;font-size:34px;color:#6c707e;letter-spacing:-0.033px;">Python Console.py</span>
<span class="t" style="left:3155.18px;top:1940.22px;font-size:34px;color:#6c707e;letter-spacing:0.348px;">&lt;No interpreter&gt;</span>
<span class="t m" style="left:199.84px;top:1399.80px;font-size:34.2px;color:#000;letter-spacing:-1.323px">Starting debug server at port 4,444</span>
<span class="t m" style="left:199.84px;top:1453.60px;font-size:34.2px;color:#000;letter-spacing:-1.323px">Use the following code to connect to the debugger:</span>
<span class="t m" style="left:199.84px;top:1507.40px;font-size:34.2px;color:#000;letter-spacing:-1.323px">import pydevd_pycharm</span>
<span class="t m" style="left:199.84px;top:1561.20px;font-size:34.2px;color:#000;letter-spacing:-1.323px">pydevd_pycharm.settrace('localhost', port=4444, stdoutToServer=True, stderrToServer=True)</span>
<span class="t m" style="left:199.84px;top:1615.00px;font-size:34.2px;color:#000;letter-spacing:-1.323px">Waiting for process connection…</span>
<span class="t m" style="left:199.84px;top:1668.80px;font-size:34.2px;color:#000;letter-spacing:-1.323px">Connected to pydev debugger (build 242.23726.102)</span>
</div>
</body></html>
